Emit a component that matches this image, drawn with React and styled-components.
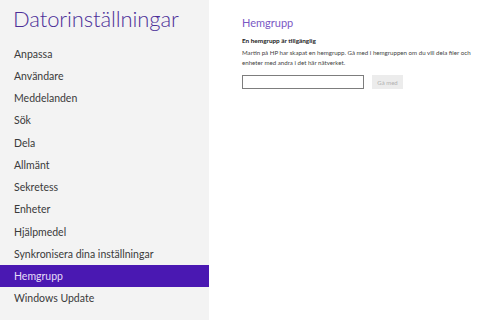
import React from "react";
import styled, { createGlobalStyle } from "styled-components";

const Global = createGlobalStyle`
  html, body { margin: 0; padding: 0; }
  body { font-family: "Lato", "Open Sans", sans-serif; }
  * { box-sizing: border-box; }
`;

const Page = styled.div`
  display: flex;
  width: 480px;
  height: 320px;
  overflow: hidden;
  background: #ffffff;
`;

const Sidebar = styled.div`
  width: 209px;
  flex-shrink: 0;
  background: #f3f3f3;
  display: flex;
  flex-direction: column;
`;

const Title = styled.h1`
  margin: 0;
  padding: 4px 0 0 13px;
  height: 42px;
  font-weight: 300;
  font-size: 22px;
  line-height: 29px;
  letter-spacing: -0.1px;
  color: #4c2f98;
  white-space: nowrap;
`;

const Nav = styled.div`
  display: flex;
  flex-direction: column;
`;

const NavItem = styled.div`
  height: 22.25px;
  padding: 1px 0 0 14px;
  display: flex;
  align-items: center;
  font-size: 10.5px;
  white-space: nowrap;
  color: ${(p) => (p.$active ? "#e6ddf8" : "#3a3a3a")};
  background: ${(p) => (p.$active ? "#4a18b2" : "transparent")};
`;

const Content = styled.div`
  flex: 1;
  padding: 15px 0 0 33px;
  display: flex;
  flex-direction: column;
`;

const Heading = styled.h2`
  margin: 0;
  font-weight: 400;
  font-size: 11px;
  line-height: 16px;
  color: #7a58c4;
  height: 20px;
`;

const SubHeading = styled.div`
  font-size: 6.4px;
  font-weight: 700;
  color: #222;
  line-height: 10px;
  margin-top: 1px;
`;

const Description = styled.div`
  font-size: 6.15px;
  color: #444;
  line-height: 10px;
  margin-top: 2px;
  white-space: nowrap;
`;

const Row = styled.div`
  display: flex;
  gap: 8px;
  margin-top: 7px;
  align-items: center;
`;

const Input = styled.input`
  width: 122px;
  height: 14px;
  border: 1px solid #7d7d7d;
  background: #fff;
  padding: 0;
  outline: none;
`;

const Button = styled.button`
  width: 31px;
  height: 14px;
  padding: 0;
  border: none;
  background: #ececec;
  color: #b0b0b0;
  font-family: inherit;
  font-size: 6px;
`;

const items = [
  "Anpassa",
  "Användare",
  "Meddelanden",
  "Sök",
  "Dela",
  "Allmänt",
  "Sekretess",
  "Enheter",
  "Hjälpmedel",
  "Synkronisera dina inställningar",
  "Hemgrupp",
  "Windows Update",
];

export default function App() {
  return (
    <Page>
      <Global />
      <Sidebar>
        <Title>Datorinställningar</Title>
        <Nav>
          {items.map((it) => (
            <NavItem key={it} $active={it === "Hemgrupp"}>
              {it}
            </NavItem>
          ))}
        </Nav>
      </Sidebar>
      <Content>
        <Heading>Hemgrupp</Heading>
        <SubHeading>En hemgrupp är tillgänglig</SubHeading>
        <Description>
          Martin på HP har skapat en hemgrupp. Gå med i hemgruppen om du vill dela filer och
          <br />
          enheter med andra i det här nätverket.
        </Description>
        <Row>
          <Input />
          <Button>Gå med</Button>
        </Row>
      </Content>
    </Page>
  );
}
